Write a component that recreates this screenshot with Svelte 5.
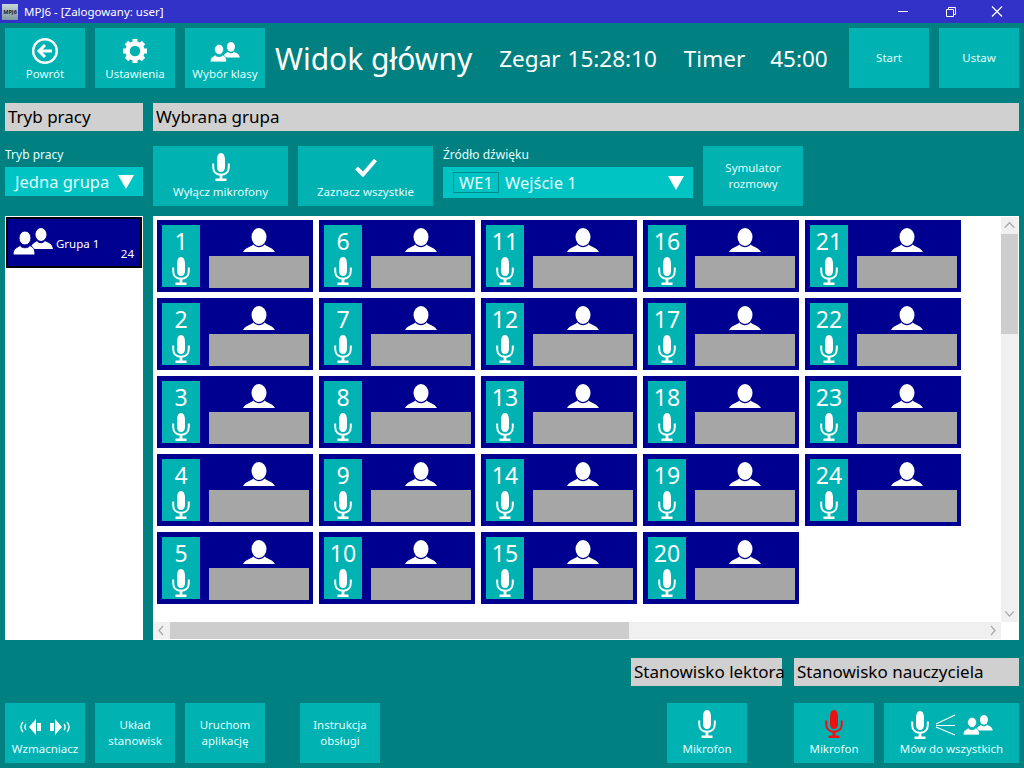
<script>
  const tiles = Array.from({ length: 24 }, (_, i) => i + 1);
  const teeth = [0, 45, 90, 135, 180, 225, 270, 315];
</script>

{#snippet mic(color = '#fff')}
  <svg class="mic" viewBox="0 0 18 28" aria-hidden="true">
    <path d="M9 0C6.2 0 5 3 5 7.5V14c0 3 1.6 5 4 5s4-2 4-5V7.500C13 3 11.800 0 9 0Z" fill={color} />
    <path d="M1.200 10.500V14c0 5 3.400 7.800 7.800 7.800s7.800-2.800 7.800-7.800v-3.500" fill="none" stroke={color} stroke-width="2" />
    <rect x="7.600" y="21" width="2.800" height="5" fill={color} />
    <rect x="3.500" y="25.500" width="11" height="2.500" fill={color} />
  </svg>
{/snippet}

{#snippet person()}
  <svg class="person" viewBox="0 0 32 24" aria-hidden="true">
    <ellipse cx="16" cy="9" rx="7.500" ry="9" fill="#fff" />
    <path d="M0 24C2 20 7 19 10.500 16.500 13 20 19 20 21.500 16.500 25 19 30 20 32 24Z" fill="#fff" />
  </svg>
{/snippet}

{#snippet group(sep)}
  <svg class="group" viewBox="0 0 40 27" aria-hidden="true">
    <ellipse cx="28" cy="6.500" rx="5.500" ry="6.500" fill="#fff" />
    <path d="M17 21C19 15 22 15 24 13 26 16 30 16 32 13 35 15 39 15 40 21Z" fill="#fff" />
    <ellipse cx="12" cy="10" rx="6" ry="7" fill="#fff" stroke={sep} stroke-width="1" />
    <path d="M0 27C0 20 4 20 7 17.500 9 20.500 15 20.500 17 17.500 20 19.500 22 20 22 27Z" fill="#fff" stroke={sep} stroke-width="1" />
  </svg>
{/snippet}

{#snippet arrow()}
  <svg class="arrow" viewBox="0 0 16 14" aria-hidden="true"><polygon points="0,0 16,0 8,14" fill="#fff" /></svg>
{/snippet}

<div class="window">
  <header class="titlebar">
    <span class="appicon">MPJ6</span>
    <span class="apptitle">MPJ6 - [Zalogowany: user]</span>
    <svg class="winbtns" viewBox="0 0 126 23" aria-hidden="true">
      <path d="M0 11.500H10" stroke="#fff" fill="none" />
      <path d="M48.500 9.500h7v7h-7zM50.500 9.500v-2h7v7h-2" stroke="#fff" fill="none" />
      <path d="M94 6.500l10 10M104 6.500l-10 10" stroke="#fff" fill="none" stroke-width="1.200" />
    </svg>
  </header>

  <div class="toolbar">
    <button class="btn icon">
      <svg class="back" viewBox="0 0 26 26" aria-hidden="true">
        <circle cx="13" cy="13" r="11.800" fill="none" stroke="#fff" stroke-width="2.400" />
        <path d="M20 13H8M13 7l-6 6 6 6" fill="none" stroke="#fff" stroke-width="3" />
      </svg>
      <span>Powrót</span>
    </button>
    <button class="btn icon">
      <svg class="gear" viewBox="0 0 24 24" aria-hidden="true">
        {#each teeth as a}
          <rect x="9.500" y="0" width="5" height="6" fill="#fff" transform="rotate({a} 12 12)" />
        {/each}
        <circle cx="12" cy="12" r="7.500" fill="none" stroke="#fff" stroke-width="4.500" />
      </svg>
      <span>Ustawienia</span>
    </button>
    <button class="btn icon">
      <span class="topgroup">{@render group('#00b2b2')}</span>
      <span>Wybór klasy</span>
    </button>
    <h1>Widok główny</h1>
    <span class="clock zegar">Zegar</span>
    <span class="clock time">15:28:10</span>
    <span class="clock timer">Timer</span>
    <span class="clock left">45:00</span>
    <button class="btn start">Start</button>
    <button class="btn">Ustaw</button>
  </div>

  <div class="columns heads">
    <div class="bar">Tryb pracy</div>
    <div class="bar">Wybrana grupa</div>
  </div>

  <div class="columns controls">
    <div class="field">
      <span class="caption">Tryb pracy</span>
      <div class="combo mode"><span>Jedna grupa</span>{@render arrow()}</div>
    </div>
    <div class="actions">
      <button class="btn icon wide">{@render mic()}<span>Wyłącz mikrofony</span></button>
      <button class="btn icon wide">
        <svg class="check" viewBox="0 0 22 19" aria-hidden="true"><path d="M1.500 10l6.500 6.500L20.500 2" fill="none" stroke="#fff" stroke-width="4" /></svg>
        <span>Zaznacz wszystkie</span>
      </button>
      <div class="field source">
        <span class="caption">Źródło dźwięku</span>
        <div class="combo"><span class="tag">WE1</span><span class="srcname">Wejście 1</span>{@render arrow()}</div>
      </div>
      <button class="btn sim">Symulator<br />rozmowy</button>
    </div>
  </div>

  <div class="columns panels">
    <div class="list">
      <div class="listitem">
        <span class="listgroup">{@render group('#000090')}</span>
        <span class="listname">Grupa 1</span>
        <span class="listcount">24</span>
      </div>
    </div>
    <div class="board">
      <div class="tiles">
        {#each tiles as n}
          <div class="tile">
            <div class="seat">
              <span class="num">{n}</span>
              {@render mic()}
            </div>
            <div class="desk">
              <div class="who">{@render person()}</div>
              <div class="name"></div>
            </div>
          </div>
        {/each}
      </div>
      <div class="vscroll">
        <svg class="chev" viewBox="0 0 16 16" aria-hidden="true"><path d="M3.500 10L8 5.500l4.500 4.500" fill="none" stroke="#a6a6a6" stroke-width="1.300" /></svg>
        <div class="vthumb"></div>
        <div class="fill"></div>
        <svg class="chev" viewBox="0 0 16 16" aria-hidden="true"><path d="M4 6l4 4.500L12 6" fill="none" stroke="#a6a6a6" stroke-width="1.200" /></svg>
      </div>
      <div class="hscroll">
        <svg class="chev" viewBox="0 0 17 16" aria-hidden="true"><path d="M10 3.500L6 8l4 4.500" fill="none" stroke="#a6a6a6" stroke-width="1.200" /></svg>
        <div class="hthumb"></div>
        <div class="fill"></div>
        <svg class="chev" viewBox="0 0 17 16" aria-hidden="true"><path d="M7 3.500L11 8l-4 4.500" fill="none" stroke="#a6a6a6" stroke-width="1.200" /></svg>
      </div>
    </div>
  </div>

  <div class="stations">
    <div class="bar lector">Stanowisko lektora</div>
    <div class="bar teacher">Stanowisko nauczyciela</div>
  </div>

  <div class="footer">
    <button class="btn icon">
      <svg class="speakers" viewBox="0 0 52 18" aria-hidden="true">
        <path d="M4 4C1.500 7 1.500 11 4 14M7 6c-1.500 2-1.500 4 0 6" fill="none" stroke="#fff" stroke-width="1.300" />
        <path d="M10 9l7-8v16ZM18 5h4v8h-4Z" fill="#fff" />
        <path d="M31 5h4v8h-4ZM36 1l7 8-7 8Z" fill="#fff" />
        <path d="M45 6c1.500 2 1.500 4 0 6M48 4c2.500 3 2.500 7 0 10" fill="none" stroke="#fff" stroke-width="1.300" />
      </svg>
      <span>Wzmacniacz</span>
    </button>
    <button class="btn">Układ<br />stanowisk</button>
    <button class="btn">Uruchom<br />aplikację</button>
    <button class="btn manual">Instrukcja<br />obsługi</button>
    <button class="btn icon lectormic">{@render mic()}<span>Mikrofon</span></button>
    <button class="btn icon teachermic">{@render mic('#ee1111')}<span>Mikrofon</span></button>
    <button class="btn icon speakall">
      <span class="speakicons">
        {@render mic()}
        <svg class="rays" viewBox="0 0 22 22" aria-hidden="true"><path d="M1 10L20 1M1 11.500H20M1 13L20 21" stroke="#fff" fill="none" stroke-width="1.100" /></svg>
        <span class="speakgroup">{@render group('#00b2b2')}</span>
      </span>
      <span>Mów do wszystkich</span>
    </button>
  </div>
</div>

<style>
  :global(body) {
    background: #008080;
    overflow: hidden;
  }

  .window {
    width: 1024px;
    height: 768px;
    background: #008080;
    font-family: "Noto Sans", "Open Sans", sans-serif;
    color: #e0ffff;
    overflow: hidden;
  }

  .titlebar {
    height: 23px;
    background: #3232c8;
    display: flex;
    align-items: center;
    color: #fff;
    font-size: 11.500px;
  }
  .appicon {
    width: 16px;
    height: 16px;
    margin: 0 6px 0 2px;
    background: linear-gradient(#c8d8d8, #8098a0);
    color: #102030;
    font-size: 5.500px;
    font-weight: 700;
    line-height: 16px;
    text-align: center;
  }
  .winbtns {
    width: 126px;
    height: 23px;
    margin-left: auto;
  }

  .btn {
    width: 80px;
    height: 60px;
    flex: none;
    padding: 0;
    border: 0;
    background: #00b2b2;
    color: #e0ffff;
    font: inherit;
    font-size: 11.500px;
    line-height: 16px;
  }
  .btn.icon {
    display: flex;
    flex-direction: column;
    align-items: center;
    justify-content: flex-end;
    padding-bottom: 6px;
    box-sizing: border-box;
    white-space: nowrap;
  }

  .toolbar {
    display: flex;
    align-items: center;
    gap: 10px;
    height: 60px;
    padding: 5px 5px 0;
  }
  .toolbar .back { width: 26px; height: 26px; margin-bottom: 2px; }
  .toolbar .gear { width: 24px; height: 24px; margin-bottom: 3px; }
  .topgroup { display: flex; margin-bottom: 4px; }
  .topgroup :global(.group) { width: 30px; height: 20px; }
  h1 {
    margin: 0;
    font-size: 30px;
    font-weight: 400;
    color: #fff;
    white-space: nowrap;
  }
  .clock {
    font-size: 22.500px;
    color: #fff;
    white-space: nowrap;
  }
  .zegar { margin-left: 17px; }
  .time { margin-left: -3px; }
  .timer { margin-left: 17px; }
  .left { margin-left: 15px; }
  .start { margin-left: auto; }

  .columns {
    display: grid;
    grid-template-columns: 138px 866px;
    column-gap: 10px;
    padding: 0 5px;
  }
  .bar {
    height: 28px;
    background: #d0d0d0;
    color: #000;
    font-size: 17px;
    line-height: 28px;
    padding-left: 3px;
    white-space: nowrap;
    box-sizing: border-box;
  }
  .heads { margin-top: 15px; }
  .controls { margin-top: 15px; height: 60px; }

  .field {
    display: flex;
    flex-direction: column;
    justify-content: flex-end;
  }
  .caption {
    font-size: 12px;
    line-height: 16px;
    margin-bottom: 4px;
  }
  .combo {
    display: flex;
    align-items: center;
    height: 31px;
    background: #00c4c4;
    font-size: 16.500px;
    padding: 0 9px 0 10px;
    box-sizing: border-box;
  }
  .combo.mode { height: 29px; margin-bottom: 10px; }
  .mode span { flex: 1; }
  .arrow { width: 16px; height: 14px; flex: none; }
  .actions {
    display: flex;
    gap: 10px;
  }
  .wide { width: 135px; }
  .check { width: 22px; height: 19px; margin-bottom: 7px; }
  .source { width: 250px; }
  .source .combo { margin-bottom: 8px; }
  .tag {
    border: 1px solid #008c8c;
    padding: 0 5px;
    line-height: 19px;
  }
  .srcname { margin-left: 6px; flex: 1; }
  .sim { width: 100px; }

  .panels {
    margin-top: 10px;
    height: 424px;
  }
  .list {
    background: #fff;
    padding: 1px;
  }
  .listitem {
    position: relative;
    height: 51px;
    background: #000090;
    border: 2px solid #000;
    box-sizing: border-box;
    color: #fff;
  }
  .listgroup { position: absolute; left: 5px; top: 9px; }
  .listgroup :global(.group) { width: 40px; height: 27px; display: block; }
  .listname { position: absolute; left: 48px; top: 17px; font-size: 11.500px; }
  .listcount { position: absolute; right: 6px; top: 27px; font-size: 11.500px; }

  .board {
    display: grid;
    grid-template-columns: 1fr 17px;
    grid-template-rows: 405px 17px;
    background: #fff;
    padding: 1px 1px 1px 0;
    box-sizing: border-box;
  }
  .tiles {
    display: grid;
    grid-auto-flow: column;
    grid-template-rows: repeat(5, 72px);
    grid-auto-columns: 156px;
    gap: 6px;
    padding: 3px 0 0 4px;
    align-content: start;
    justify-content: start;
  }
  .tile {
    display: flex;
    background: #000090;
    padding: 5px 4px 4px 5px;
    box-sizing: border-box;
    gap: 9px;
  }
  .seat {
    width: 38px;
    height: 62px;
    background: #00b2b2;
    display: flex;
    flex-direction: column;
    align-items: center;
    flex: none;
  }
  .num {
    font-size: 23px;
    line-height: 33px;
    color: #fff;
  }
  .seat .mic { margin-top: -1px; }
  .mic {
    width: 18px;
    height: 28px;
    flex: none;
  }
  .btn.icon > .mic { margin-bottom: 3px; }
  .desk {
    flex: 1;
    display: flex;
    flex-direction: column;
    align-items: center;
  }
  .who { height: 31px; padding-top: 3px; box-sizing: border-box; }
  .person { width: 32px; height: 24px; display: block; }
  .name {
    align-self: stretch;
    height: 32px;
    background: #a6a6a6;
  }

  .vscroll, .hscroll {
    display: flex;
    background: #f0f0f0;
  }
  .vscroll { flex-direction: column; }
  .chev { width: 17px; height: 17px; flex: none; }
  .fill { flex: 1; }
  .vthumb {
    height: 100px;
    background: #cdcdcd;
  }
  .hthumb {
    width: 459px;
    background: #cdcdcd;
  }

  .stations {
    display: flex;
    justify-content: flex-end;
    gap: 12px;
    margin-top: 18px;
    padding-right: 5px;
  }
  .lector { width: 151px; }
  .teacher { width: 225px; }

  .footer {
    display: flex;
    gap: 10px;
    margin-top: 17px;
    padding: 0 5px;
  }
  .speakers { width: 52px; height: 18px; margin-bottom: 5px; }
  .manual { margin-left: 25px; }
  .lectormic { margin-left: auto; }
  .teachermic { margin-left: 37px; }
  .speakall { width: 135px; }
  .speakicons {
    display: flex;
    align-items: center;
    gap: 6px;
    margin-bottom: 2px;
  }
  .rays { width: 22px; height: 22px; }
  .speakgroup { display: flex; }
  .speakgroup :global(.group) { width: 30px; height: 20px; }
</style>
